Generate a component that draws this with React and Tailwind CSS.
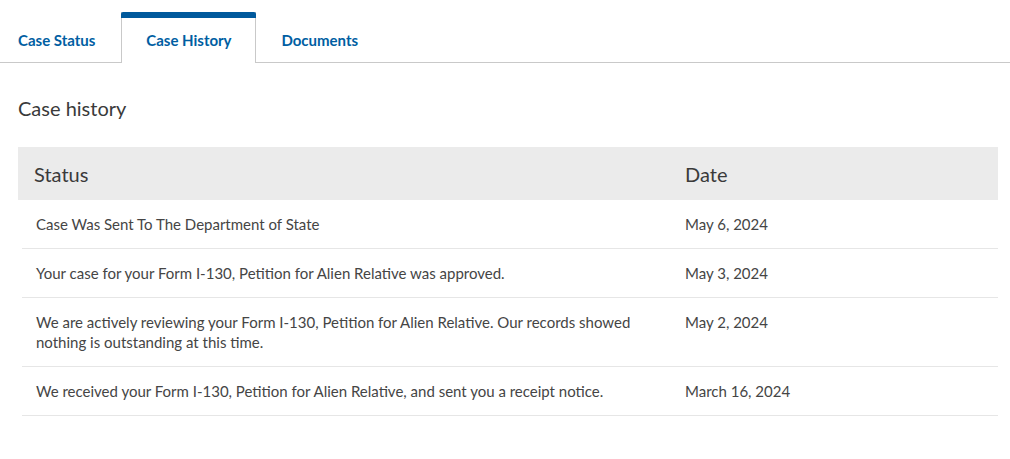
const rows = [
  { status: 'Case Was Sent To The Department of State', date: 'May 6, 2024' },
  { status: 'Your case for your Form I-130, Petition for Alien Relative was approved.', date: 'May 3, 2024' },
  {
    status:
      'We are actively reviewing your Form I-130, Petition for Alien Relative. Our records showed nothing is outstanding at this time.',
    date: 'May 2, 2024',
  },
  { status: 'We received your Form I-130, Petition for Alien Relative, and sent you a receipt notice.', date: 'March 16, 2024' },
];

export default function App() {
  return (
    <div className="min-h-screen bg-white font-['Lato',sans-serif] text-[#333]">
      {/* tab strip */}
      <div className="flex h-[63px] items-end border-b border-[#c9c9c9] pt-3">
        <button className="h-[50px] pl-[18px] pr-[24px] pt-[6px] text-[15px] font-bold text-[#005ea2]">Case Status</button>
        <button className="relative -mb-px ml-[2px] h-[51px] w-[135px] border-x border-[#c9c9c9] bg-white pt-[6px] text-[15px] font-bold text-[#005ea2]">
          <span className="absolute -left-px -right-px top-0 h-[6px] rounded-t-[2px] bg-[#00599c]" />
          Case History
        </button>
        <button className="h-[50px] px-[25px] pt-[6px] text-[15px] font-bold text-[#005ea2]">Documents</button>
      </div>

      <div className="pl-[18px] pr-[12px]">
        <h2 className="mt-[32px] text-[20px] leading-[26px] text-[#3a3a3a]">Case history</h2>

        <div className="mt-[26px]">
          <div className="grid h-[53px] grid-cols-[667px_1fr] items-center bg-[#ebebeb] text-[20px] text-[#3a3a3a]">
            <div className="pl-4">Status</div>
            <div>Date</div>
          </div>
          <div className="ml-[4px]">
            {rows.map((r) => (
              <div
                key={r.date}
                className="grid grid-cols-[663px_1fr] border-b border-[#e6e6e6] py-[14px] text-[15px] leading-[20px] text-[#454545]"
              >
                <div className="pl-[14px] pr-[24px]">{r.status}</div>
                <div>{r.date}</div>
              </div>
            ))}
          </div>
        </div>
      </div>
    </div>
  );
}
